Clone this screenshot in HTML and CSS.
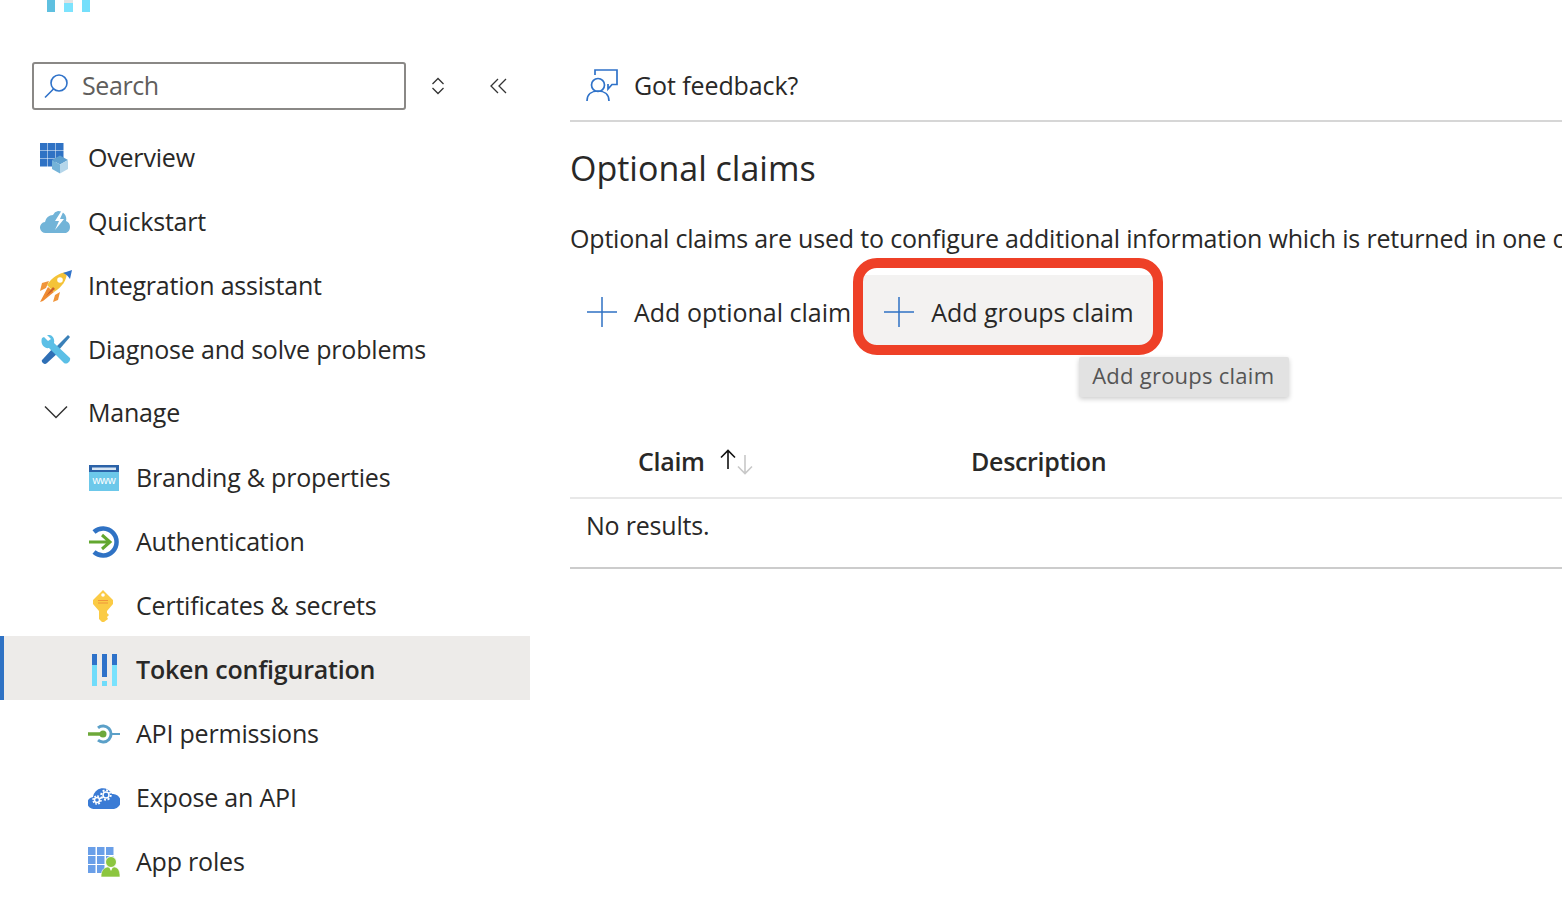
FILE: index.html
```html
<!DOCTYPE html>
<html>
  <head>
    <title>Token configuration</title>
    <link rel="stylesheet" href="styles.css">
  </head>
  <body>
    <div class="page">
      <!--left menu-->
      <div class="sidebar">
        <div class="logo-cut">
          <svg width="44" height="12" viewBox="0 0 44 12">
            <rect x="1" y="0" width="8" height="12" fill="#5fc0e0"/>
            <rect x="18" y="0" width="9" height="3" fill="#e3e3e3"/>
            <rect x="18" y="3" width="9" height="9" fill="#7de3fd"/>
            <rect x="36" y="0" width="8" height="12" fill="#75dffb"/>
          </svg>
        </div>
        <div class="search-row">
          <div class="search-box">
            <svg class="search-icon" width="26" height="26" viewBox="0 0 26 26" fill="none" stroke="#2f72c9" stroke-width="1.6">
              <circle cx="15" cy="10" r="8"/>
              <path d="M9.500 16 1 24.500"/>
            </svg>
            <span>Search</span>
          </div>
          <svg class="updown" width="14" height="18" viewBox="0 0 14 18" fill="none" stroke="#333" stroke-width="1.300">
            <path d="M1.500 7 7 1.500 12.500 7"/>
            <path d="M1.500 11 7 16.500 12.500 11"/>
          </svg>
          <svg class="collapse" width="18" height="16" viewBox="0 0 18 16" fill="none" stroke="#333" stroke-width="1.300">
            <path d="M8 1 1 8l7 7"/>
            <path d="M16 1 9 8l7 7"/>
          </svg>
        </div>

        <div class="nav">
          <div class="item">
            <svg class="ico ico-over" width="30" height="32" viewBox="0 0 30 32">
              <g fill="#2f72c4">
                <rect x="1" y="1" width="7.500" height="7.500"/><rect x="9" y="1" width="7.500" height="7.500"/><rect x="17" y="1" width="7.500" height="7.500"/>
                <rect x="1" y="9" width="7.500" height="7.500"/><rect x="9" y="9" width="7.500" height="7.500"/><rect x="17" y="9" width="7.500" height="7.500"/>
                <rect x="1" y="17" width="7.500" height="7.500"/><rect x="9" y="17" width="7.500" height="7.500"/>
              </g>
              <path d="M13 18l8-4.500 8 4.500-8 4.500z" fill="#5ea0cf"/>
              <path d="M13 18v9l8 4.500v-9z" fill="#74b3d8"/>
              <path d="M29 18v9l-8 4.500v-9z" fill="#b5d6ea"/>
            </svg>
            <span>Overview</span>
          </div>
          <div class="item">
            <svg class="ico" width="32" height="24" viewBox="0 0 32 24">
              <path d="M6 23a5.500 5.500 0 0 1-1-11 8 8 0 0 1 8-7 7 7 0 0 1 5-4 8 8 0 0 1 8 10 6.500 6.500 0 0 1 0 12z" fill="#72b4d8"/>
              <path d="M22 0l-7 11h4l-4 9 9-11h-4l4-9z" fill="#fff"/>
            </svg>
            <span>Quickstart</span>
          </div>
          <div class="item">
            <svg class="ico" width="32" height="32" viewBox="0 0 32 32">
              <path d="M9 11 2 13l-2 8 6-3zM20 22l-2 8-5 2 2-7z" fill="#f0953a"/>
              <path d="M7 15C12 7 19 3 27 2c0 8-5 15-13 20z" fill="#f4c338"/>
              <path d="M23 3l9-3-2 9c-2-3-4-5-7-6z" fill="#2f72c9"/>
              <circle cx="20" cy="10" r="2.800" fill="#fff"/>
              <path d="M8 17l6 5L3 31l-3 1z" fill="#ef8c33"/>
              <path d="M13 17l-7 9 9-7z" fill="#c85d2a"/>
            </svg>
            <span>Integration assistant</span>
          </div>
          <div class="item">
            <svg class="ico ico-tool" width="30" height="30" viewBox="0 0 30 30">
              <path d="M27 0l2 2-12 14-3-3z" fill="#3a80b8"/>
              <path d="M13 12l5 5L6 28q-2 2-4 0l-1-1q-1-2 1-3z" fill="#2f6fb5"/>
              <path d="M3 2l4 4 3-2-4-4c5-1 8 3 7 8l16 15c1 3-3 7-6 5L8 13C3 14-1 9 1 3z" fill="#5bbfe6"/>
            </svg>
            <span>Diagnose and solve problems</span>
          </div>
          <div class="item manage">
            <svg class="ico chevron" width="24" height="14" viewBox="0 0 24 14" fill="none" stroke="#333" stroke-width="1.500">
              <path d="M1 1.500 12 12.500 23 1.500"/>
            </svg>
            <span>Manage</span>
          </div>

          <div class="item sub">
            <svg class="ico ico-one" width="30" height="26" viewBox="0 0 30 26">
              <rect width="30" height="26" fill="#6cc8ea"/>
              <rect width="30" height="7" fill="#2b62a8"/>
              <rect x="3" y="2.500" width="24" height="2.500" fill="#d8e6f3"/>
              <text x="15" y="19" class="www">www</text>
            </svg>
            <span>Branding &amp; properties</span>
          </div>
          <div class="item sub">
            <svg class="ico ico-one" width="30" height="32" viewBox="0 0 30 32">
              <path d="M5 6A13.500 13.500 0 1 1 5 26" fill="none" stroke="#2f72c4" stroke-width="4.500"/>
              <path d="M0 16h21M13 9l8 7-8 7" fill="none" stroke="#62a72f" stroke-width="3"/>
            </svg>
            <span>Authentication</span>
          </div>
          <div class="item sub">
            <svg class="ico ico-key" width="20" height="32" viewBox="0 0 20 32">
              <path d="M10 0 20 10v4l-6 7v2l2 2-2 2 1 2-4 3H9l-3-3V21l-6-7v-4z" fill="#fbcb45"/>
              <circle cx="10" cy="5" r="1.800" fill="#fff"/>
              <path d="M5 10.500h10M5 13h10" stroke="#f0953a" stroke-width="1"/>
            </svg>
            <span>Certificates &amp; secrets</span>
          </div>
          <div class="item sub active">
            <svg class="ico ico-token" width="26" height="32" viewBox="0 0 26 32">
              <rect x="0" y="0" width="5" height="11" fill="#2f72c9"/>
              <rect x="0" y="11" width="5" height="21" fill="#70dcfa"/>
              <rect x="10" y="0" width="5" height="23" fill="#2f72c9"/>
              <rect x="10" y="27" width="5" height="5" fill="#6fdcfa"/>
              <rect x="20" y="0" width="5" height="11" fill="#2f72c9"/>
              <rect x="20" y="11" width="5" height="21" fill="#79e2fd"/>
            </svg>
            <span>Token configuration</span>
          </div>
          <div class="item sub">
            <svg class="ico" width="32" height="20" viewBox="0 0 32 20">
              <path d="M10 3.800a8 8 0 1 1 0 12.400" fill="none" stroke="#5ba0c8" stroke-width="3"/>
              <path d="M23 10h9" stroke="#5ba0c8" stroke-width="2"/>
              <path d="M0 10h15" stroke="#6da83a" stroke-width="3.500"/>
              <circle cx="15" cy="10" r="3.500" fill="#6da83a"/>
            </svg>
            <span>API permissions</span>
          </div>
          <div class="item sub">
            <svg class="ico" width="32" height="24" viewBox="0 0 32 24">
              <path d="M6 23a6 6 0 0 1-1-12 10 10 0 0 1 19-3 7.500 7.500 0 0 1 2 15z" fill="#3a7bd5"/>
              <circle cx="9" cy="14" r="2.500" fill="none" stroke="#fff" stroke-width="1.500"/>
              <circle cx="9" cy="14" r="4" fill="none" stroke="#fff" stroke-width="1.500" stroke-dasharray="1.800 1.300"/>
              <circle cx="18" cy="9" r="3" fill="none" stroke="#fff" stroke-width="1.500"/>
              <circle cx="18" cy="9" r="4.800" fill="none" stroke="#fff" stroke-width="1.800" stroke-dasharray="2 1.700"/>
            </svg>
            <span>Expose an API</span>
          </div>
          <div class="item sub">
            <svg class="ico" width="32" height="30" viewBox="0 0 32 30">
              <g fill="#6a9fe8">
                <rect x="0" y="0" width="7.500" height="8"/><rect x="9" y="0" width="7.500" height="8"/><rect x="18" y="0" width="7.500" height="8"/>
                <rect x="0" y="9" width="7.500" height="8"/><rect x="9" y="9" width="7.500" height="8"/><rect x="18" y="9" width="7.500" height="8"/>
                <rect x="0" y="18" width="7.500" height="8"/><rect x="9" y="18" width="7.500" height="8"/>
              </g>
              <path d="M13 30c0-7 3-9 6-10h8c3 1 5 3 5 10z" fill="#8cc63f" stroke="#fff" stroke-width=".6"/>
              <path d="M21 20l2 4 2-4z" fill="#fff"/>
              <circle cx="23" cy="15" r="5.500" fill="#8cc63f" stroke="#fff"/>
            </svg>
            <span>App roles</span>
          </div>
        </div>
      </div>

      <!--right content-->
      <div class="main">
        <div class="feedback">
          <svg class="feedback-icon" width="32" height="32" viewBox="0 0 32 32" fill="none" stroke="#2f72c9" stroke-width="1.700">
            <path d="M9 6V1h22v14.500h-5L22 20v-5"/>
            <circle cx="12" cy="16" r="6.500"/>
            <path d="M1 32c0-7 5-10 11-10s11 3 11 10"/>
          </svg>
          <span>Got feedback?</span>
        </div>
        <h1>Optional claims</h1>
        <p class="desc">Optional claims are used to configure additional information which is returned in one or more tokens.</p>
        <div class="toolbar">
          <div class="btn">
            <svg class="plus" width="32" height="32" viewBox="0 0 32 32" stroke="#2f72c4" stroke-width="1.500"><path d="M16 1v30M1 16h30"/></svg>
            <span>Add optional claim</span>
          </div>
          <div class="btn hover">
            <svg class="plus" width="32" height="32" viewBox="0 0 32 32" stroke="#2f72c4" stroke-width="1.500"><path d="M16 1v30M1 16h30"/></svg>
            <span>Add groups claim</span>
            <div class="redbox"></div>
            <div class="tooltip">Add groups claim</div>
          </div>
        </div>
        <div class="thead">
          <div class="col-claim">
            <b>Claim</b>
            <svg class="sort" width="36" height="26" viewBox="0 0 36 26" fill="none" stroke-width="1.600">
              <path d="M10 20V2M3 8.500 10 1.500 17 8.500" stroke="#111"/>
              <path d="M27 6v18.500M20 17.500l7 7 7-7" stroke="#c8c8c8"/>
            </svg>
          </div>
          <b>Description</b>
        </div>
        <div class="tbody">No results.</div>
      </div>
    </div>
  </body>
</html>
```

FILE: styles.css
```css
html,
body {
  margin: 0;
  height: 100%;
  overflow: hidden;
  background: #fff;
}
body {
  font-family: "Open Sans", "Noto Sans", sans-serif;
  font-size: 25px;
  color: #292827;
}
.page {
  display: flex;
  height: 898px;
}
.sidebar {
  width: 530px;
  flex-shrink: 0;
}
.logo-cut {
  height: 12px;
  padding-left: 46px;
  line-height: 0;
}
.search-row {
  display: flex;
  align-items: center;
  height: 48px;
  margin-top: 50px;
  padding-left: 32px;
}
.search-box {
  display: flex;
  align-items: center;
  box-sizing: border-box;
  width: 374px;
  height: 48px;
  border: 2px solid #8a8886;
  border-radius: 3px;
  color: #605e5c;
  letter-spacing: -0.4px;
}
.search-box span {
  margin-top: -2px;
}
.search-icon {
  margin-left: 10px;
  margin-right: 12px;
}
.updown {
  margin-left: 25px;
}
.collapse {
  margin-left: 45px;
}
.nav {
  margin-top: 14px;
}
/*menu row*/
.item {
  display: grid;
  grid-template-columns: 48px 1fr;
  align-items: center;
  box-sizing: border-box;
  height: 64px;
  padding: 4px 0 0 40px;
  letter-spacing: -0.2px;
}
.item span {
  margin-top: -2px;
}
.item.sub {
  padding-left: 88px;
}
.item.active {
  background: #edebe9;
  box-shadow: inset 4px 0 0 #2f72c4;
  font-weight: 600;
}
.ico-over {
  margin-left: -1px;
}
.ico-tool,
.ico-one {
  margin-left: 1px;
}
.ico-key {
  margin-left: 5px;
}
.ico-token {
  margin-left: 4px;
}
.chevron {
  margin: -4px 0 0 4px;
}
.item.manage span {
  margin-top: -4px;
}
.www {
  font-family: "Liberation Sans", sans-serif;
  font-size: 11px;
  fill: #fff;
  text-anchor: middle;
}
.main {
  flex: 1;
  min-width: 0;
  margin-left: 40px;
  overflow: hidden;
}
.feedback {
  display: flex;
  align-items: center;
  box-sizing: border-box;
  height: 122px;
  padding: 50px 0 0 16px;
  border-bottom: 2px solid #d6d6d6;
  letter-spacing: -0.1px;
}
.feedback-icon {
  margin-right: 16px;
}
h1 {
  margin: 23px 0 0 0;
  font-size: 34px;
  font-weight: 400;
  line-height: 46px;
}
.desc {
  margin: 30px 0 0 0;
  line-height: 34px;
  white-space: nowrap;
  letter-spacing: -0.18px;
}
.toolbar {
  display: flex;
  margin-top: 20px;
}
.btn {
  display: flex;
  align-items: center;
  position: relative;
  box-sizing: border-box;
  height: 70px;
  padding: 4px 0 0 16px;
}
.btn .plus {
  margin-right: 16px;
}
.btn.hover {
  width: 290px;
  margin-left: 12px;
  padding-left: 20px;
  background: #f3f2f1;
}
/*red mark over the button*/
.redbox {
  position: absolute;
  left: -10px;
  top: -17px;
  right: -10px;
  bottom: -10px;
  border: 10px solid #ee4027;
  border-radius: 24px;
}
.tooltip {
  position: absolute;
  left: 216px;
  top: 82px;
  width: 210px;
  height: 40px;
  box-sizing: border-box;
  padding-left: 13px;
  background: #e2e2e2;
  color: #555;
  font-size: 22px;
  line-height: 36px;
  letter-spacing: 0.25px;
  white-space: nowrap;
  border-radius: 2px;
  box-shadow: 0 2px 5px rgba(0, 0, 0, 0.2);
}
.thead {
  display: flex;
  align-items: center;
  box-sizing: border-box;
  height: 84px;
  margin-top: 70px;
  padding: 10px 0 0 68px;
  border-bottom: 2px solid #e8e8e8;
}
.thead b {
  font-weight: 600;
  letter-spacing: -0.3px;
}
.col-claim {
  display: flex;
  align-items: center;
  width: 333px;
}
.sort {
  margin: 2px 0 0 13px;
}
.tbody {
  box-sizing: border-box;
  height: 70px;
  padding: 9px 0 0 16px;
  border-bottom: 2px solid #ccc;
  letter-spacing: -0.2px;
}
```
